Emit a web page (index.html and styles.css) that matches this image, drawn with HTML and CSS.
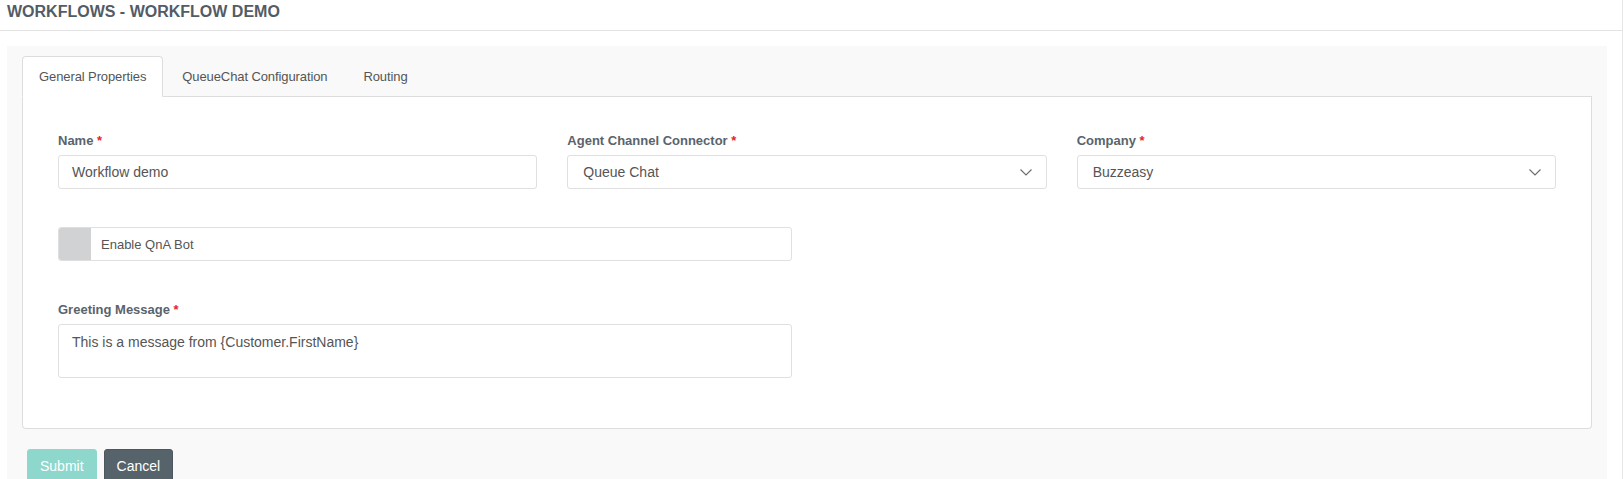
FILE: index.html
```html
<!DOCTYPE html>
<html lang="en">
<head>
<meta charset="utf-8">
<title>Workflows - Workflow Demo</title>
<link rel="stylesheet" href="styles.css">
</head>
<body>
<div class="page">
  <header class="page-header">
    <h1 class="page-title">WORKFLOWS - WORKFLOW DEMO</h1>
  </header>
  <section class="panel">
    <nav class="tabs">
      <a class="tab active">General Properties</a>
      <a class="tab">QueueChat Configuration</a>
      <a class="tab">Routing</a>
    </nav>
    <div class="tab-content">
      <div class="row row-3">
        <div class="field">
          <label class="label">Name <span class="req">*</span></label>
          <div class="input">Workflow demo</div>
        </div>
        <div class="field">
          <label class="label">Agent Channel Connector <span class="req">*</span></label>
          <div class="input select">
            <span>Queue Chat</span>
            <svg class="chevron" width="12" height="7" viewBox="0 0 12 7"><polyline points="0.5,0.5 6,6 11.5,0.5" fill="none" stroke="#6b6b6b" stroke-width="1.1"/></svg>
          </div>
        </div>
        <div class="field">
          <label class="label">Company <span class="req">*</span></label>
          <div class="input select">
            <span>Buzzeasy</span>
            <svg class="chevron" width="12" height="7" viewBox="0 0 12 7"><polyline points="0.5,0.5 6,6 11.5,0.5" fill="none" stroke="#6b6b6b" stroke-width="1.1"/></svg>
          </div>
        </div>
      </div>
      <div class="row row-2 row-toggle">
        <div class="toggle">
          <span class="toggle-box"></span>
          <span class="toggle-label">Enable QnA Bot</span>
        </div>
      </div>
      <div class="row row-2 row-greeting">
        <div class="field">
          <label class="label">Greeting Message <span class="req">*</span></label>
          <div class="textarea">This is a message from {Customer.FirstName}</div>
        </div>
      </div>
    </div>
    <div class="actions">
      <button class="btn btn-submit">Submit</button>
      <button class="btn btn-cancel">Cancel</button>
    </div>
  </section>
</div>
</body>
</html>
```
FILE: styles.css
```css
* { box-sizing: border-box; }
html, body { margin: 0; padding: 0; background: #fff; }
body {
  font-family: "Liberation Sans", Arial, sans-serif;
  color: #555;
  overflow: hidden;
}
.page {
  min-height: 100vh;
  border-right: 1px solid #e6e6e6;
}
.page-header {
  height: 31px;
  padding: 2px 7px 0;
  border-bottom: 1px solid #e3e3e3;
}
.page-title {
  margin: 0;
  font-size: 16px;
  line-height: 20px;
  font-weight: bold;
  color: #535c65;
}
.panel {
  margin: 15px 15px 0 7px;
  padding: 10px 15px 40px;
  background: #f9f9f9;
  min-height: 480px;
}
.tabs {
  display: flex;
  border-bottom: 1px solid #ddd;
}
.tab {
  height: 41px;
  margin-right: 2px;
  margin-bottom: -1px;
  padding: 0 16px;
  display: flex;
  align-items: center;
  font-size: 13px;
  letter-spacing: -0.1px;
  color: #555;
  border: 1px solid transparent;
  border-radius: 4px 4px 0 0;
}
.tab.active {
  background: #fff;
  border-color: #ddd #ddd #fff;
}
.tab-content {
  background: #fff;
  border: 1px solid #ddd;
  border-top: none;
  border-radius: 0 0 4px 4px;
  padding: 36px 35px 50px;
}
.row {
  display: grid;
  column-gap: 30px;
}
.row-3 { grid-template-columns: repeat(3, 1fr); }
.row-2 { grid-template-columns: repeat(2, 1fr); }
.row-toggle { margin-top: 38px; }
.row-greeting { margin-top: 41px; }
.label {
  display: block;
  font-size: 13px;
  line-height: 15px;
  font-weight: bold;
  color: #5a636c;
  margin-bottom: 7px;
}
.req { color: #e8232a; }
.input {
  height: 34px;
  border: 1px solid #e0e0e0;
  border-radius: 3px;
  padding: 0 13px;
  display: flex;
  align-items: center;
  font-size: 14px;
  color: #555;
  background: #fff;
}
.select {
  padding: 0 14px 0 15px;
  justify-content: space-between;
}
.chevron { display: block; margin-top: 1px; }
.toggle {
  height: 34px;
  border: 1px solid #e0e0e0;
  border-radius: 3px;
  display: flex;
  align-items: center;
  background: #fff;
  overflow: hidden;
}
.toggle-box {
  width: 32px;
  height: 100%;
  background: #d1d2d4;
}
.toggle-label {
  margin-left: 10px;
  font-size: 13px;
  color: #555;
}
.textarea {
  height: 54px;
  border: 1px solid #e0e0e0;
  border-radius: 3px;
  padding: 7px 13px 6px;
  font-size: 14px;
  line-height: 20px;
  color: #555;
  background: #fff;
}
.actions {
  display: flex;
  gap: 7px;
  margin-top: 20px;
  padding-left: 5px;
}
.btn {
  height: 34px;
  padding: 0 12px;
  border-radius: 3px;
  font-family: "Liberation Sans", Arial, sans-serif;
  font-size: 14px;
  color: #fff;
  border: 1px solid transparent;
}
.btn-submit { background: #8ed7cd; border-color: #8ed7cd; }
.btn-cancel { background: #57636b; border-color: #4d585f; }
```
